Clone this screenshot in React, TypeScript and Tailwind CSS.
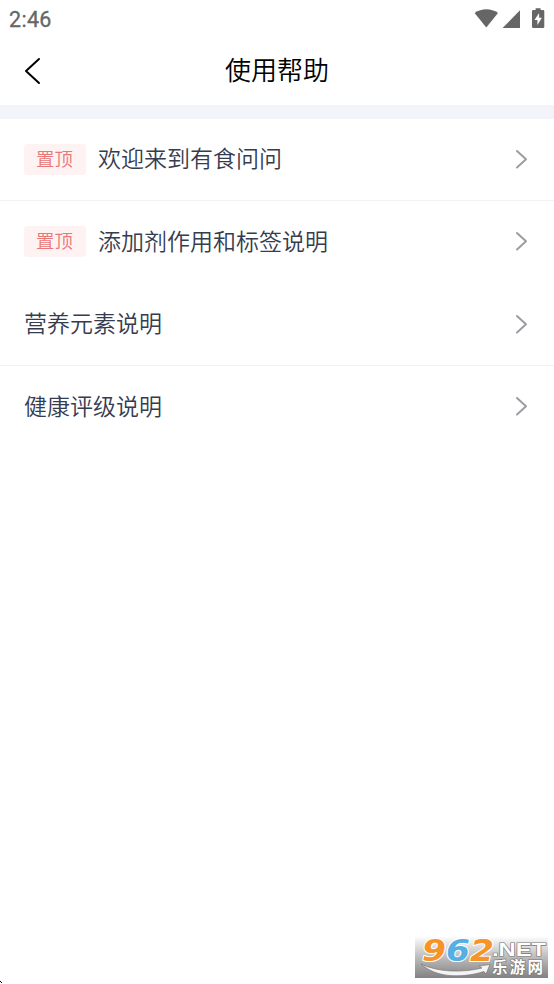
type HelpItem = {
  title: string;
  pinned?: boolean;
  divider?: boolean;
};

const helpItems: HelpItem[] = [
  { title: "欢迎来到有食问问", pinned: true, divider: true },
  { title: "添加剂作用和标签说明", pinned: true },
  { title: "营养元素说明", divider: true },
  { title: "健康评级说明" },
];

function StatusBar() {
  return (
    <div className="flex h-[37px] items-center justify-between pr-2 pl-[9px] text-[#666]">
      <span className="pt-[3px] font-[Roboto,sans-serif] text-[21.5px] leading-6 font-normal tracking-[0.3px] [-webkit-text-stroke:0.3px_#666]">
        2:46
      </span>
      <svg width="72" height="22" viewBox="0 0 72 22" fill="currentColor">
        {/* wifi */}
        <path d="M0.6 4.9C7.6 -0.1 17 -0.1 24 4.9L12.3 19.4Z" />
        {/* signal */}
        <path d="M28.6 20H46V2.3Z" />
        {/* battery */}
        <path
          fillRule="evenodd"
          d="M61.6 0.2h5v1.9h2.5a1.2 1.2 0 0 1 1.2 1.2v15.4a1.2 1.2 0 0 1-1.2 1.2h-9.9a1.2 1.2 0 0 1-1.2-1.2V3.3a1.2 1.2 0 0 1 1.2-1.2h2.4ZM65.1 5.1 60.5 12.1h2.9v5L67.9 9.8h-2.8Z"
        />
      </svg>
    </div>
  );
}

function Header() {
  return (
    <header className="grid h-[68px] grid-cols-[60px_1fr_60px] items-center">
      <button className="pl-[24px]" aria-label="返回">
        <svg width="18" height="28" viewBox="0 0 18 28" fill="none" stroke="#000" strokeWidth="2" strokeLinecap="round">
          <path d="M15 2 2 14 15 26" strokeLinejoin="round" />
        </svg>
      </button>
      <h1 className="pb-[5px] text-center text-[26px] leading-9 font-[350] text-black">使用帮助</h1>
    </header>
  );
}

function HelpRow({ title, pinned, divider }: HelpItem) {
  return (
    <li
      className={`flex h-[82.5px] items-center border-b pr-[26px] pl-6 ${
        divider ? "border-[#f2f2f4]" : "border-transparent"
      }`}
    >
      {pinned && (
        <span className="mt-px mr-3 flex h-[31px] w-[62px] items-center justify-center rounded-[3px] bg-[#fff2f2] pr-px pb-[3px] text-[18.4px] leading-none font-[350] text-[#e87878]">
          置顶
        </span>
      )}
      <span className="flex-1 pb-[3px] text-[23px] leading-8 font-[350] text-[#363c50]">{title}</span>
      <svg width="13" height="20" viewBox="0 0 13 20" fill="none" stroke="#9c9da3" strokeWidth="2">
        <path d="M2 2 11 10.3 2 18.5" strokeLinecap="round" strokeLinejoin="round" />
      </svg>
    </li>
  );
}

function SiteBadge() {
  return (
    <div className="absolute right-[6px] bottom-[6px] h-[42px] w-[133px] bg-linear-to-b from-white via-[#bdbdbd] to-[#828282]">
      <svg
        width="133"
        height="42"
        viewBox="0 0 133 42"
        className="overflow-visible font-['Liberation_Sans','Noto_Sans_CJK_SC',sans-serif] font-bold"
      >
        <path
          d="M6 28C22 36 47 37 67 32L64 30 75 28.5 71 38 69 35.5C45 43 20 41 6 28Z"
          fill="#f4f4f4"
          stroke="#777"
          strokeWidth="0.7"
        />
        <g
          className="font-['DejaVu_Sans',sans-serif]"
          fontSize="31"
          fontStyle="italic"
          stroke="#fff"
          strokeWidth="2"
          paintOrder="stroke"
          strokeLinejoin="round"
        >
          <text x="7" y="25" textLength="24" lengthAdjust="spacingAndGlyphs" fill="#f79428">9</text>
          <text x="31" y="25" textLength="24" lengthAdjust="spacingAndGlyphs" fill="#55aee4">6</text>
          <text x="55" y="25" textLength="24" lengthAdjust="spacingAndGlyphs" fill="#f79428">2</text>
        </g>
        <g fill="#fff" stroke="#777" strokeWidth="1.2" paintOrder="stroke">
          <text x="77" y="19.5" fontSize="19" textLength="54" lengthAdjust="spacingAndGlyphs">.NET</text>
          <text x="77" y="37" fontSize="15.5" textLength="51" lengthAdjust="spacing">乐游网</text>
        </g>
      </svg>
    </div>
  );
}

export default function App() {
  return (
    <div className="relative h-[984px] w-[554px] overflow-hidden bg-white font-['Noto_Sans_CJK_SC',sans-serif]">
      <StatusBar />
      <Header />
      <div className="h-[14px] bg-[#f3f4f9]" />
      <ul className="-mt-px">
        {helpItems.map((item) => (
          <HelpRow key={item.title} {...item} />
        ))}
      </ul>
      <SiteBadge />
      {/* rounded screen corner */}
      <svg className="absolute bottom-0 left-0" width="3" height="4" viewBox="0 0 3 4">
        <path d="M0 1h1v1h1v1H1V2H0Z" fill="#000" />
      </svg>
    </div>
  );
}
